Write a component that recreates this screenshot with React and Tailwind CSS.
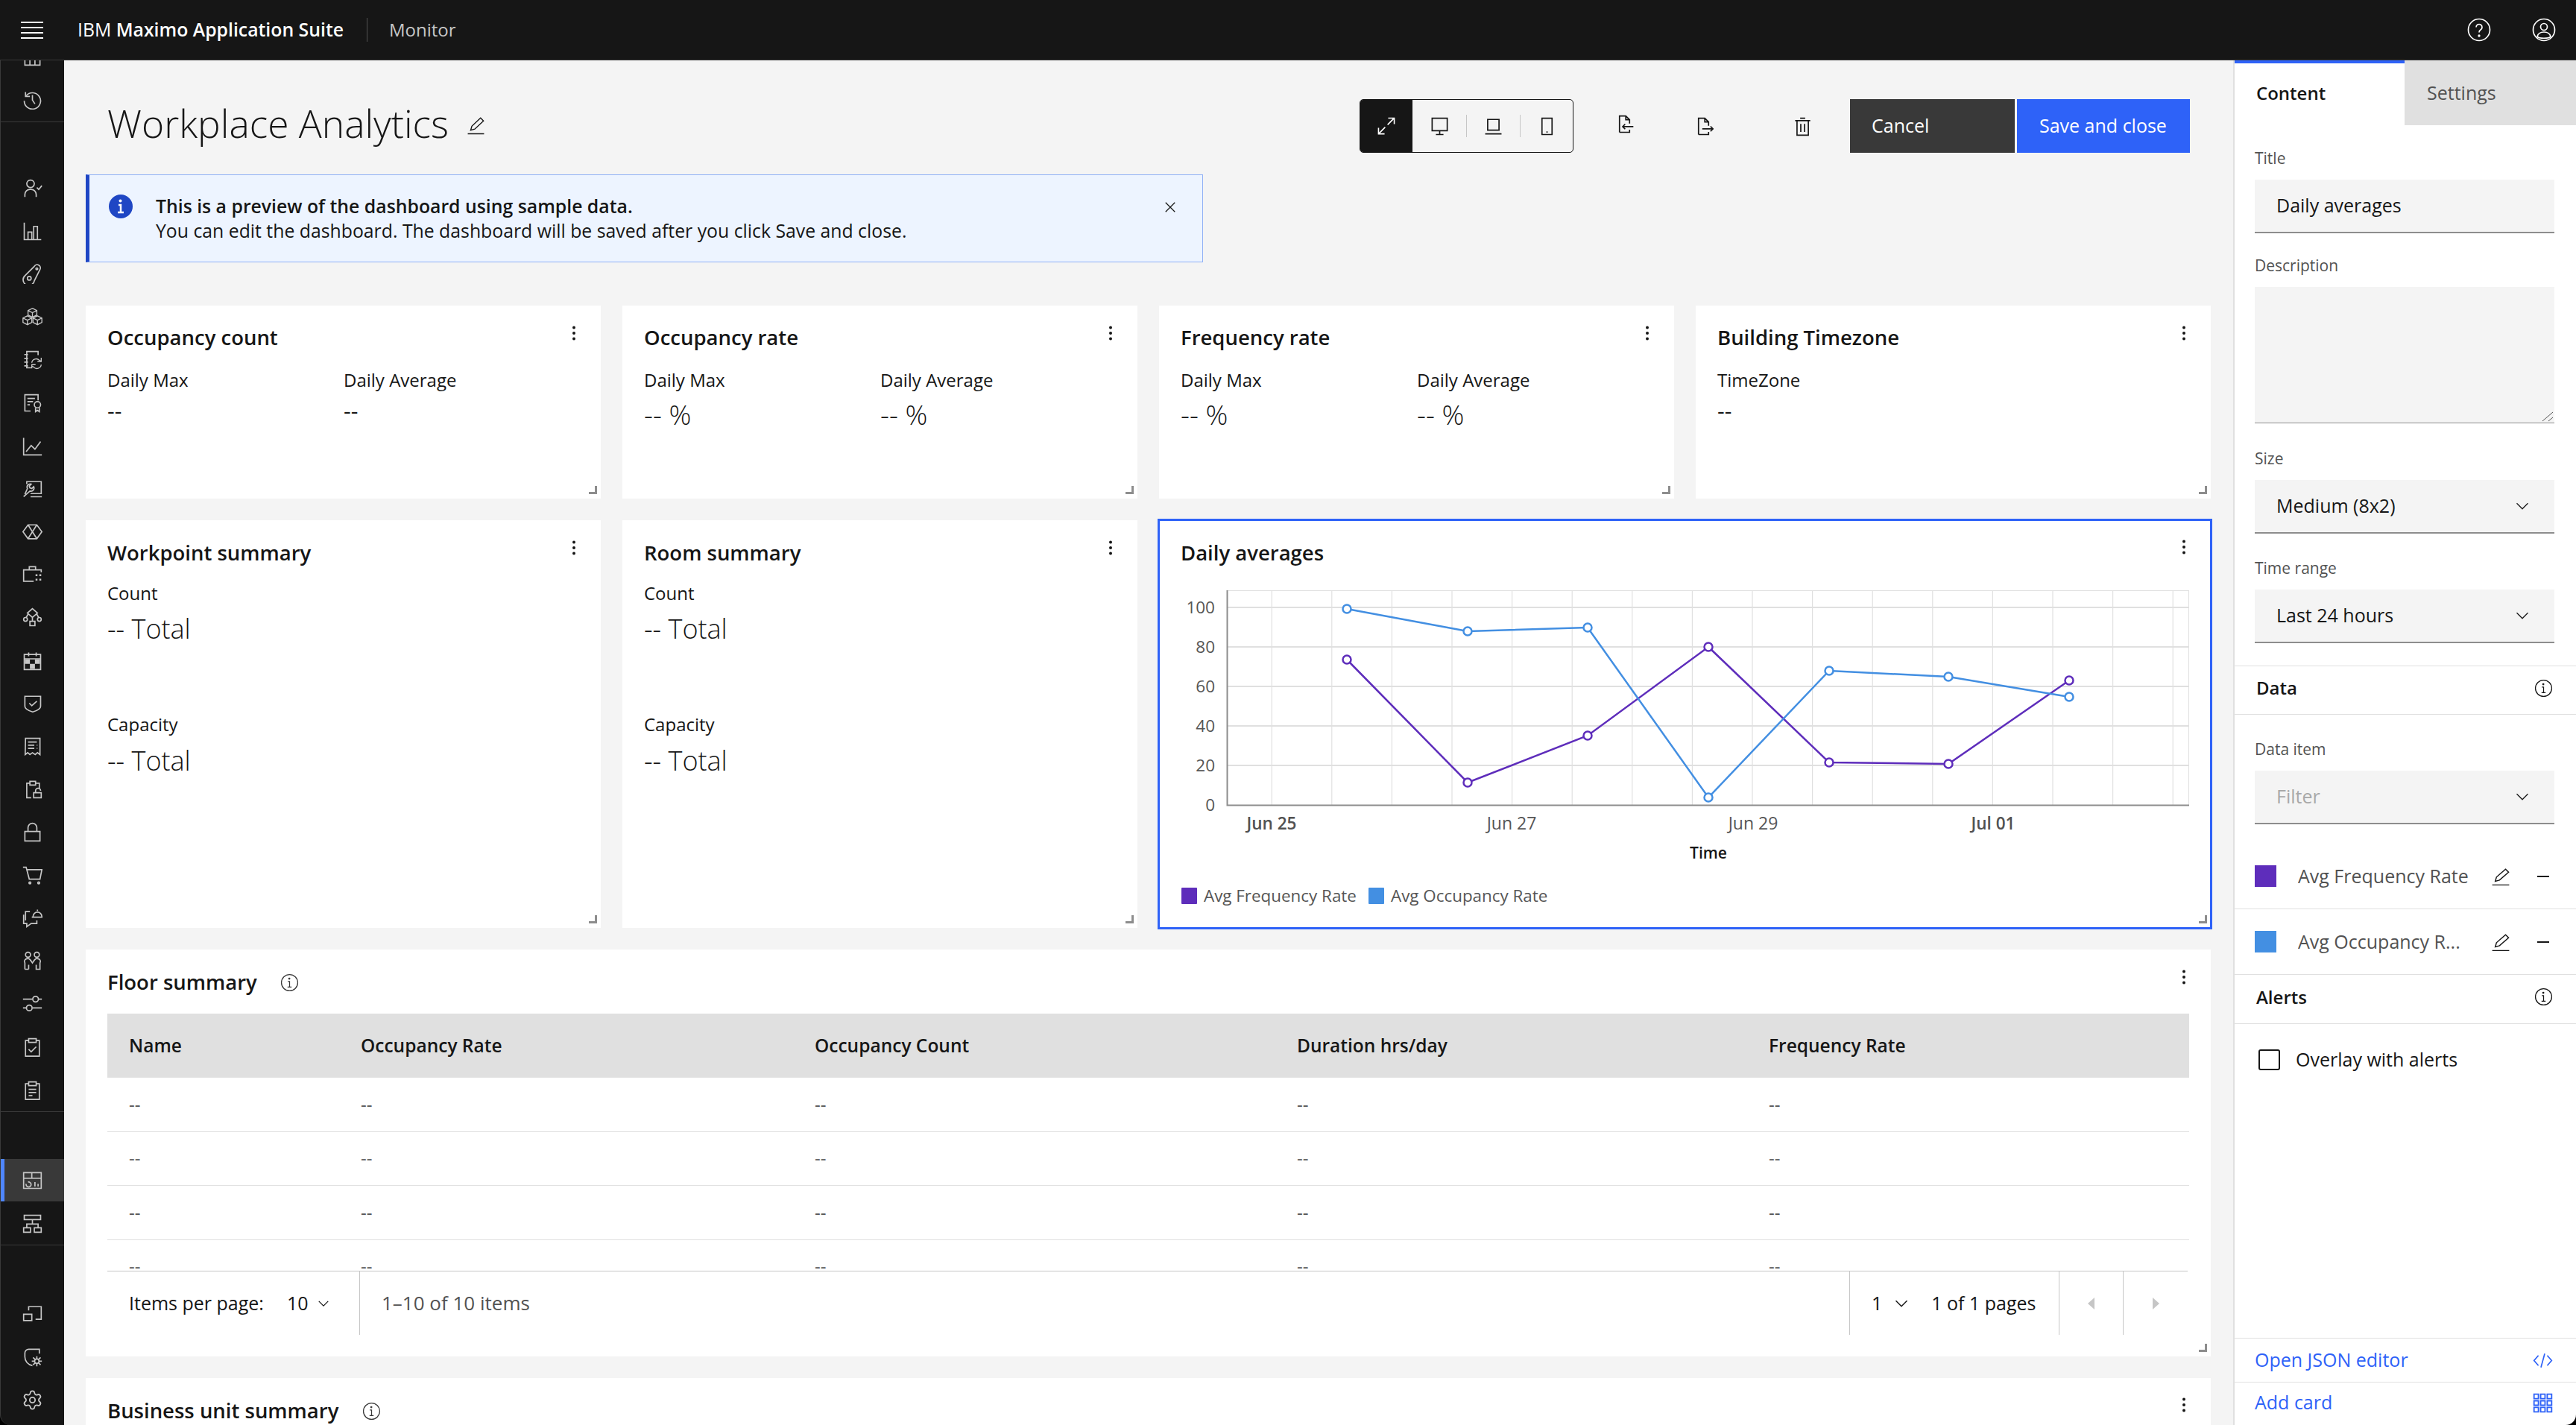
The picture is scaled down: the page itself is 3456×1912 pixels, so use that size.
import { Settings } from 'lucide-react';

const RAIL_TOP = [
  <path d="M4 20h24v10H4zM12 20v10M20 20v10" />,
  <>
    <path d="M5 4v7h7" />
    <path d="M6 10a13 13 0 1 1-3 8" />
    <path d="M16 9v8l4 6" />
  </>,
];

const cube = (cx, cy) =>
  `M${cx} ${cy - 7}l7 3.5v7l-7 3.5-7-3.5v-7zM${cx - 7} ${cy - 3.5}l7 3.5 7-3.5M${cx} ${cy}v7`;

const RAIL_MAIN = [
  <>
    <circle cx="13" cy="9" r="6" />
    <path d="M4 30v-4a8 8 0 0 1 8-8h2a8 8 0 0 1 8 8v4" />
    <path d="M23 15l3 3 5-6" />
  </>,
  <path d="M3 2v27h27M9 29V17h6v12M18 29V8h6v21" />,
  <>
    <path d="M5 18L19 4a5 5 0 0 1 9 5l-9 18a9 9 0 1 1-14-9z" />
    <circle cx="11" cy="23" r="3" />
    <circle cx="23" cy="8" r="1.5" />
  </>,
  <path d={cube(16, 9) + cube(8, 21) + cube(24, 21)} strokeWidth="1.6" />,
  <>
    <path d="M25 9V3H7v26h7M3 8h6M3 14h6M3 20h6M3 26h6" />
    <path d="M15 21a7 7 0 0 1 12-4l3 2M30 13v6h-6M30 24a7 7 0 0 1-12 4l-3-2M15 30v-6h6" strokeWidth="1.6" />
  </>,
  <>
    <path d="M13 29H4V3h21v9M8 9h12M8 14h9M8 19h4" />
    <circle cx="24" cy="19" r="5" />
    <path d="M21 24v6l3-2 3 2v-6" />
  </>,
  <path d="M2 3v27h29M6 25l8-10 6 6 9-12" />,
  <path d="M7 9V5h23v19H13M13 29h18M2 29l10-9a5 5 0 0 0 6-7l-3 3-3-1-1-3 3-3a5 5 0 0 0-6 7L4 25" />,
  <path d="M9 5h14l8 11-8 11H9L1 16zM9 5l14 22M23 5L9 27" />,
  <>
    <path d="M30 13V9H2v18h16M11 9V4h10v5" />
    <path d="M21 16h3v3h-3zM27 16h3v3h-3zM21 23h3v3h-3zM27 23h3v3h-3z" fill="currentColor" stroke="none" />
  </>,
  <>
    <path d="M16 2l8 7-8 7-8-7zM9 11l-3 5M23 11l3 5M16 16v6" />
    <circle cx="5" cy="19" r="3" />
    <circle cx="27" cy="19" r="3" />
    <path d="M12 22h8v7h-8z" />
  </>,
  <>
    <path d="M3 6h26v24H3zM3 13h26M10 3v6M22 3v6" />
    <path d="M4 14h8v7H4zM20 14h8v7h-8zM12 21h8v8h-8z" fill="currentColor" stroke="none" />
  </>,
  <path d="M4 5h25v16c0 4-6 7-12.500 9C10 28 4 25 4 21zM11 16l4 4 8-7" />,
  <path d="M5 3h23v26l-4-3-3.500 3-4.500-3-4 3-3.500-3-4 3zM9 9h14M9 14h10M9 19h10M23 14h1M23 19h1" />,
  <>
    <path d="M14 30H7V7h5M21 7h6v8M12 4h9v6h-9z" />
    <path d="M18 22h12v8H18zM21 22v-3a4 4 0 0 1 8 0" />
  </>,
  <path d="M4 15h24v15H4zM9 15V9a7 7 0 0 1 14 0v6" />,
  <>
    <path d="M1 3h5l5 19h17l3-15H8" />
    <circle cx="12" cy="28" r="1.500" />
    <circle cx="26" cy="28" r="1.500" />
  </>,
  <path d="M17 14a7 7 0 0 1 14 0M15 15h17M24 5V3M12 6H5v14M2 11v14h5v5l7-5h9v-5" />,
  <>
    <circle cx="9" cy="6" r="4" />
    <circle cx="23" cy="6" r="4" />
    <path d="M4 29V19c-2-3 0-7 5-7 3 0 5 4 7 7 2-3 4-7 7-7 5 0 7 4 5 7v10h-6v-7M10 29v-7M4 29h6" />
  </>,
  <>
    <path d="M1 9h15M26 9h5M1 23h5M16 23h15" />
    <circle cx="21" cy="9" r="4.500" />
    <circle cx="11" cy="23" r="4.500" />
  </>,
  <path d="M10 6H5v25h22V6h-5M10 3h12v6H10zM10 20l4 4 8-8" />,
  <path d="M10 6H5v25h22V6h-5M10 3h12v6H10zM10 15h12M10 20h12M10 25h6" />,
];

const IconDashboard = (
  <>
    <path d="M2 4h28v25H2zM2 13h28M15 4v9" />
    <path d="M6 22a4 4 0 1 0 3-3M20 26v-7M25 26v-4" />
  </>
);
const IconTree = <path d="M3 3h26v7H3zM2 23h11v7H2zM19 23h11v7H19zM16 10v7M7 23v-6h18v6" />;
const IconCorner = <path d="M10 11V5h20v20h-9M2 17h13v10H2z" />;
const IconAppGear = (
  <>
    <path d="M27 11V4H10a6 6 0 0 0-6 6v6a14 14 0 0 0 12 14" />
    <circle cx="23" cy="23" r="3.500" />
    <path d="M23 15v4M23 27v4M15 23h4M27 23h4M17 17l3 3M26 26l3 3M17 29l3-3M26 20l3-3" />
  </>
);

function Ic({ children, size = 27, stroke = 2, className = '' }) {
  return (
    <svg viewBox="0 0 32 32" width={size} height={size} fill="none" stroke="currentColor" strokeWidth={stroke} className={`shrink-0 ${className}`}>
      {children}
    </svg>
  );
}

function RailItem({ children, active }) {
  return (
    <div className={`flex h-[57.6px] shrink-0 items-center justify-center border-l-[5px] pr-[5px] ${active ? 'border-[#4f86ff] bg-[#393939]' : 'border-transparent'}`}>
      <Ic>{children}</Ic>
    </div>
  );
}

function Rail() {
  return (
    <aside className="flex w-[86px] shrink-0 flex-col overflow-hidden rounded-bl-[14px] border-l border-[#393939] bg-[#161616] text-[#c6c6c6]">
      <div className="-mt-[34.400px] shrink-0">
        {RAIL_TOP.map((icon, i) => (
          <RailItem key={i}>{icon}</RailItem>
        ))}
      </div>
      <div className="mt-[1px] shrink-0 border-t border-[#393939] pt-[60px]">
        {RAIL_MAIN.map((icon, i) => (
          <RailItem key={i}>{icon}</RailItem>
        ))}
      </div>
      <div className="shrink-0 border-t border-[#393939] pt-[63px]">
        <RailItem active>{IconDashboard}</RailItem>
        <RailItem>{IconTree}</RailItem>
      </div>
      <div className="shrink-0 border-t border-[#393939] pt-[63px]">
        <RailItem>{IconCorner}</RailItem>
        <RailItem>{IconAppGear}</RailItem>
        <div className="flex h-[57.6px] items-center justify-center px-[5px]">
          <Settings size={29} strokeWidth={1.500} />
        </div>
      </div>
    </aside>
  );
}

function Header() {
  return (
    <header className="flex h-[81px] shrink-0 items-center border-b border-[#393939] bg-[#161616] text-white">
      <div className="ml-[28px] flex w-[30px] flex-col gap-[5px]">
        <span className="h-[2px] bg-white" />
        <span className="h-[2px] bg-white" />
        <span className="h-[2px] bg-white" />
        <span className="h-[2px] bg-white" />
      </div>
      <div className="ml-[46px] w-[356px] text-[24.800px] whitespace-nowrap">
        IBM <span className="font-semibold">Maximo Application Suite</span>
      </div>
      <div className="ml-[32px] h-[32px] w-px bg-[#525252]" />
      <div className="ml-[29px] text-[24px] text-[#c6c6c6]">Monitor</div>
      <div className="ml-auto flex items-center gap-[55px] pr-[27px]">
        <Ic size={32} stroke={1.700}>
          <circle cx="16" cy="16" r="14.500" />
          <path d="M12 12.500a4 4 0 1 1 6 3.500c-1.500 1-2 2-2 3.500" />
          <circle cx="16" cy="24" r="0.800" fill="currentColor" />
        </Ic>
        <Ic size={32} stroke={1.700}>
          <circle cx="16" cy="16" r="14.500" />
          <circle cx="16" cy="12" r="4.500" />
          <path d="M7 25c1-4 4-6 9-6s8 2 9 6c-2 3-16 3-18 0z" />
        </Ic>
      </div>
    </header>
  );
}

function Dots({ className = '' }) {
  return (
    <svg width="6" height="20" viewBox="0 0 6 20" className={`absolute right-[33px] ${className}`} fill="#161616">
      <circle cx="3" cy="2.500" r="2" />
      <circle cx="3" cy="10" r="2" />
      <circle cx="3" cy="17.500" r="2" />
    </svg>
  );
}

function Handle() {
  return <span className="absolute right-[5px] bottom-[6px] h-[11px] w-[11px] border-r-[3px] border-b-[3px] border-[#8d8d8d]" />;
}

function InfoIcon({ size = 25 }) {
  return (
    <Ic size={size} stroke={1.600}>
      <circle cx="16" cy="16" r="14" />
      <path d="M12.500 23.500h7M16 23.500V14h-3" />
      <circle cx="15.500" cy="9" r="1" fill="currentColor" />
    </Ic>
  );
}

function CardTitle({ children }) {
  return <h3 className="h-[32px] text-[27.500px] leading-[32px] font-semibold text-[#161616]">{children}</h3>;
}

function KpiCard({ title, cols, big }) {
  return (
    <section className="relative bg-white pt-[27px] pr-[30px] pl-[29px]">
      <CardTitle>{title}</CardTitle>
      <Dots className="top-[27px]" />
      <div className="mt-[29px] grid grid-cols-[317px_1fr]">
        {cols.map((label) => (
          <div key={label}>
            <div className="h-[24px] text-[24px] leading-[24px] text-[#161616]">{label}</div>
            <div className={big ? 'mt-[14px] h-[40px] text-[37px] leading-[40px] font-light text-[#161616]' : 'mt-[11px] h-[36px] text-[30px] leading-[36px] text-[#161616]'}>
              {big ? '-- %' : '--'}
            </div>
          </div>
        ))}
      </div>
      <Handle />
    </section>
  );
}

function TotalCard({ title }) {
  return (
    <section className="relative bg-white pt-[28px] pr-[30px] pl-[29px]">
      <CardTitle>{title}</CardTitle>
      <Dots className="top-[27px]" />
      <div className="mt-[26px] h-[24px] text-[24px] leading-[24px] text-[#161616]">Count</div>
      <div className="mt-[16px] h-[40px] text-[36px] leading-[40px] font-light text-[#161616]">-- Total</div>
      <div className="mt-[96px] h-[24px] text-[24px] leading-[24px] text-[#161616]">Capacity</div>
      <div className="mt-[17px] h-[40px] text-[36px] leading-[40px] font-light text-[#161616]">-- Total</div>
      <Handle />
    </section>
  );
}

const GRID_X = Array.from({ length: 16 }, (_, i) => 1706.2 + 80.6 * i);
const GRID_Y = [815, 868, 921, 974, 1027];
const DATA_X = [1807, 1969, 2130, 2292, 2454, 2614, 2776];
const OCC_Y = [817, 847, 842, 1070, 900, 908, 935];
const FREQ_Y = [885, 1050, 987, 868, 1023, 1025, 913];

function Series({ ys, color }) {
  const pts = DATA_X.map((x, i) => `${x},${ys[i]}`).join(' ');
  return (
    <g>
      <polyline points={pts} fill="none" stroke={color} strokeWidth="2.500" />
      {DATA_X.map((x, i) => (
        <circle key={x} cx={x} cy={ys[i]} r="5.500" fill="white" stroke={color} strokeWidth="2.500" />
      ))}
    </g>
  );
}

function ChartCard() {
  return (
    <section className="relative col-span-2 bg-white pt-[28px] outline-3 -outline-offset-1 outline-[#2e62f8]">
      <div className="px-[29px]">
        <CardTitle>Daily averages</CardTitle>
      </div>
      <Dots className="top-[26px]" />
      <svg viewBox="1555 780 1411 390" width="1411" height="390" className="mt-[22px] block font-['Open_Sans',sans-serif]">
        <path d="M1646 792.500H2937" stroke="#e0e0e0" />
        {GRID_X.map((x) => (
          <line key={x} x1={x} x2={x} y1="792" y2="1080" stroke="#e0e0e0" strokeWidth="1.200" />
        ))}
        <line x1="2936.500" x2="2936.500" y1="792" y2="1080" stroke="#e0e0e0" />
        {GRID_Y.map((y) => (
          <line key={y} x1="1646" x2="2937" y1={y} y2={y} stroke="#e0e0e0" strokeWidth="2" />
        ))}
        <path d="M1646.500 792V1080.500H2937" fill="none" stroke="#8d8d8d" strokeWidth="2" />
        {[100, 80, 60, 40, 20, 0].map((v, i) => (
          <text key={v} x="1630" y={815 + i * 53 + 8} textAnchor="end" fontSize="22.500" fill="#565656">
            {v}
          </text>
        ))}
        <text x="1706" y="1113" textAnchor="middle" fontSize="22.500" fontWeight="600" fill="#525252">Jun 25</text>
        <text x="2028" y="1113" textAnchor="middle" fontSize="23" fill="#565656">Jun 27</text>
        <text x="2352" y="1113" textAnchor="middle" fontSize="23" fill="#565656">Jun 29</text>
        <text x="2674" y="1113" textAnchor="middle" fontSize="22.500" fontWeight="600" fill="#525252">Jul 01</text>
        <text x="2292" y="1152" textAnchor="middle" fontSize="21" fontWeight="600" fill="#161616">Time</text>
        <Series ys={FREQ_Y} color="#5e2dbb" />
        <Series ys={OCC_Y} color="#438fe2" />
      </svg>
      <div className="mt-[21px] flex items-center pl-[30px] text-[22.400px] leading-[22px] text-[#565656]">
        <span className="mr-[9px] h-[22px] w-[21px] rounded-[1px] bg-[#5e2dbb]" />
        <span className="w-[221px] whitespace-nowrap">Avg Frequency Rate</span>
        <span className="mr-[9px] h-[22px] w-[21px] rounded-[1px] bg-[#438fe2]" />
        <span>Avg Occupancy Rate</span>
      </div>
      <Handle />
    </section>
  );
}

const TABLE_COLS = 'grid grid-cols-[311px_609px_647px_633px_594px]';

function FloorCard() {
  const headers = ['Name', 'Occupancy Rate', 'Occupancy Count', 'Duration hrs/day', 'Frequency Rate'];
  return (
    <section className="relative col-span-4 h-[546px] bg-white px-[29px] pt-[28px]">
      <div className="flex h-[32px] items-center gap-[31px] text-[#393939]">
        <CardTitle>Floor summary</CardTitle>
        <InfoIcon />
      </div>
      <Dots className="top-[27px]" />
      <div className={`${TABLE_COLS} mt-[26px] h-[86px] items-center bg-[#e0e0e0] text-[24.500px] font-semibold text-[#161616]`}>
        {headers.map((h) => (
          <div key={h} className="pl-[29px]">{h}</div>
        ))}
      </div>
      <div className="h-[259px] overflow-hidden">
        {[0, 1, 2, 3].map((r) => (
          <div key={r} className={`${TABLE_COLS} h-[72.500px] shrink-0 items-center border-b border-[#e0e0e0] text-[24px] text-[#525252]`}>
            {headers.map((h) => (
              <div key={h} className="pl-[29px]">--</div>
            ))}
          </div>
        ))}
      </div>
      <div className="mr-[2px] flex h-[86px] items-stretch border-t border-[#c6c6c6] text-[25px] text-[#161616]">
        <div className="flex w-[339px] items-center border-r border-[#c6c6c6] pl-[29px]">
          <span>Items per page:</span>
          <span className="ml-[31px]">10</span>
          <Ic size={20} className="ml-[10px]"><path d="M6 11l10 10 10-10" /></Ic>
        </div>
        <div className="flex items-center pl-[29px] text-[26px] text-[#525252]">1–10 of 10 items</div>
        <div className="ml-auto flex w-[282px] items-center border-x border-[#c6c6c6] pl-[29px]">
          <span>1</span>
          <Ic size={24} className="ml-[14px]"><path d="M6 11l10 10 10-10" /></Ic>
          <span className="ml-[28px]">1 of 1 pages</span>
        </div>
        <div className="flex w-[86px] items-center justify-center border-r border-[#c6c6c6]">
          <span className="h-0 w-0 border-y-[8px] border-r-[9px] border-y-transparent border-r-[#c6c6c6]" />
        </div>
        <div className="flex w-[86px] items-center justify-center">
          <span className="h-0 w-0 border-y-[8px] border-l-[9px] border-y-transparent border-l-[#c6c6c6]" />
        </div>
      </div>
      <Handle />
    </section>
  );
}

function BusinessCard() {
  return (
    <section className="relative col-span-4 h-[200px] bg-white px-[29px] pt-[28px]">
      <div className="flex h-[32px] items-center gap-[32px] text-[#393939]">
        <CardTitle>Business unit summary</CardTitle>
        <InfoIcon />
      </div>
      <Dots className="top-[26px]" />
    </section>
  );
}

function Toolbar() {
  return (
    <div className="flex items-center text-[#161616]">
      <div className="flex h-[72px] w-[287px] overflow-hidden rounded-[5px] border border-[#161616] bg-[#f4f4f4]">
        <div className="flex w-[70px] items-center justify-center bg-[#161616] text-white">
          <Ic size={26}><path d="M19 3h10v10M29 3L18 14M13 29H3V19M3 29l11-11" /></Ic>
        </div>
        <div className="flex w-[72px] items-center justify-center">
          <Ic><path d="M4 3h24v20H4zM16 23v6M10 29h12" /></Ic>
        </div>
        <div className="my-[20px] w-px bg-[#c6c6c6]" />
        <div className="flex w-[71px] items-center justify-center">
          <Ic><path d="M7 5h18v17H7zM3 28h26" /></Ic>
        </div>
        <div className="my-[20px] w-px bg-[#c6c6c6]" />
        <div className="flex flex-1 items-center justify-center">
          <Ic><path d="M8 3h16v26H8zM15 25h2" /></Ic>
        </div>
      </div>
      <div className="ml-[54px] flex w-[29px] -translate-y-[3px] justify-center">
        <Ic><path d="M8 29V3h10l6 6v6M18 3v6h6M8 29h16v-4M30 20H13M17 16l-4 4 4 4" /></Ic>
      </div>
      <div className="ml-[77px] flex w-[29px] justify-center">
        <Ic><path d="M8 29V3h10l6 6v6M18 3v6h6M8 29h16v-4M14 20h17M27 16l4 4-4 4" /></Ic>
      </div>
      <div className="ml-[104px] flex w-[29px] justify-center">
        <Ic><path d="M4 7h24M12 3h8M7 7v23h18V7M13 12v13M19 12v13" /></Ic>
      </div>
      <button className="ml-[49px] flex h-[72px] w-[221px] items-center bg-[#393939] pl-[29px] text-[25px] text-white">Cancel</button>
      <button className="ml-[3px] flex h-[72px] w-[232px] items-center bg-[#2e62f8] pl-[30px] text-[25px] text-white">Save and close</button>
    </div>
  );
}

function Notice() {
  return (
    <div className="relative mt-[29px] ml-[29px] flex h-[118px] w-[1499px] border-y border-r border-l-[5px] border-y-[#8fb0f5] border-r-[#8fb0f5] border-l-[#1f46c4] bg-[#edf4ff] pt-[25px] text-[24.800px] leading-[33px] text-[#161616]">
      <svg viewBox="0 0 32 32" width="32" height="32" className="mt-[1px] ml-[26px] shrink-0">
        <circle cx="16" cy="16" r="16" fill="#1f46c4" />
        <path d="M12 24h8M16 24V14h-3" stroke="white" strokeWidth="2.500" fill="none" />
        <circle cx="15.500" cy="8.500" r="2" fill="white" />
      </svg>
      <div className="ml-[31px]">
        <div className="font-semibold">This is a preview of the dashboard using sample data.</div>
        <div>You can edit the dashboard. The dashboard will be saved after you click Save and close.</div>
      </div>
      <Ic size={20} className="absolute top-[33px] right-[33px]"><path d="M6 6l20 20M26 6L6 26" /></Ic>
    </div>
  );
}

function Label({ children, className = '' }) {
  return <div className={`h-[24px] text-[21px] leading-[24px] text-[#525252] ${className}`}>{children}</div>;
}

function Select({ value, placeholder }) {
  return (
    <div className={`mt-[17px] flex h-[72px] items-center justify-between border-b-2 border-[#8d8d8d] bg-[#f4f4f4] pr-[33px] pl-[29px] text-[25px] ${placeholder ? 'text-[#a8a8a8]' : 'text-[#161616]'}`}>
      {value}
      <Ic size={20} className="text-[#161616]"><path d="M4 10l12 12 12-12" /></Ic>
    </div>
  );
}

function DataRow({ color, label }) {
  return (
    <div className="flex h-[88px] items-center border-b border-[#e0e0e0] pl-[27px]">
      <span className={`h-[29px] w-[29px] shrink-0 ${color}`} />
      <span className="ml-[29px] w-[259px] truncate text-[25px] text-[#525252]">{label}</span>
      <span className="text-[#161616]">
        <Ic size={26} stroke={1.800}><path d="M2 30h28M24 4l5 5-15 13-7 2 2-7z" /></Ic>
      </span>
      <span className="ml-[36px] h-[2px] w-[16px] bg-[#161616]" />
    </div>
  );
}

function SectionHead({ children, className = '' }) {
  return (
    <div className={`flex h-[66px] items-center justify-between border-b border-[#e0e0e0] pr-[31px] pb-[6px] pl-[29px] text-[24px] font-semibold text-[#161616] ${className}`}>
      {children}
      <InfoIcon />
    </div>
  );
}

function Panel() {
  return (
    <aside className="flex w-[460px] shrink-0 flex-col overflow-hidden rounded-br-[14px] border-l-2 border-[#e0e0e0] bg-white">
      <div className="flex h-[87px] shrink-0 text-[24px]">
        <div className="flex w-[228px] items-center border-t-4 border-[#2e62f8] pb-[4px] pl-[29px] font-semibold text-[#161616]">Content</div>
        <div className="flex w-[230px] items-center bg-[#e0e0e0] pl-[30px] text-[25px] text-[#525252]">Settings</div>
      </div>
      <div className="pr-[29px] pl-[27px]">
        <Label className="mt-[32px]">Title</Label>
        <div className="mt-[17px] flex h-[72px] items-center border-b-2 border-[#8d8d8d] bg-[#f4f4f4] pl-[29px] text-[25px] text-[#161616]">Daily averages</div>
        <Label className="mt-[31px]">Description</Label>
        <div className="relative mt-[17px] h-[183px] border-b border-[#8d8d8d] bg-[#f4f4f4]">
          <svg width="16" height="14" viewBox="0 0 16 14" className="absolute right-[1px] bottom-[1px]" stroke="#525252" strokeWidth="1">
            <path d="M1 13L15 1M9 13l6-5" />
          </svg>
        </div>
        <Label className="mt-[35px]">Size</Label>
        <Select value="Medium (8x2)" />
        <Label className="mt-[34px]">Time range</Label>
        <Select value="Last 24 hours" />
      </div>
      <SectionHead className="mt-[30px] border-t">Data</SectionHead>
      <div className="pr-[29px] pl-[27px]">
        <Label className="mt-[34px]">Data item</Label>
        <Select value="Filter" placeholder />
      </div>
      <div className="mt-[26px]">
        <DataRow color="bg-[#5e2dbb]" label="Avg Frequency Rate" />
        <DataRow color="bg-[#438fe2]" label="Avg Occupancy R..." />
      </div>
      <SectionHead>Alerts</SectionHead>
      <div className="mt-[29px] flex items-center pl-[32px] text-[25px] text-[#161616]">
        <span className="h-[28px] w-[29px] rounded-[3px] border-2 border-[#161616]" />
        <span className="ml-[21px]">Overlay with alerts</span>
      </div>
      <div className="mt-auto text-[25px] text-[#2e62f8]">
        <div className="flex h-[59px] items-center justify-between border-t border-[#e0e0e0] pr-[31px] pl-[27px]">
          Open JSON editor
          <Ic size={27}><path d="M9 8l-7 8 7 8M23 8l7 8-7 8M19 5l-6 22" /></Ic>
        </div>
        <div className="flex h-[58px] items-center justify-between border-t border-[#e0e0e0] pr-[31px] pb-[3px] pl-[27px]">
          Add card
          <Ic size={27} stroke={2.200}>
            <path d="M2 2h7v7H2zM12.500 2h7v7h-7zM23 2h7v7h-7zM2 12.500h7v7H2zM12.500 12.500h7v7h-7zM23 12.500h7v7h-7zM2 23h7v7H2zM12.500 23h7v7h-7zM23 23h7v7h-7z" />
          </Ic>
        </div>
      </div>
    </aside>
  );
}

export default function App() {
  return (
    <div className="flex h-[1912px] w-[3456px] flex-col overflow-hidden bg-black font-['Open_Sans',sans-serif]">
      <Header />
      <div className="flex min-h-0 flex-1">
        <Rail />
        <main className="min-w-0 flex-1 overflow-hidden bg-[#f4f4f4]">
          <div className="mt-[52px] mr-[58px] ml-[58px] flex h-[72px] items-center justify-between">
            <div className="flex items-center gap-[24px] text-[#161616]">
              <h1 className="pb-[9px] text-[51.500px] leading-[60px] font-light">Workplace Analytics</h1>
              <Ic size={25} className="-mt-[2px]" stroke={1.800}><path d="M2 30h28M24 3l5 5-15 14-7 2 2-7z" /></Ic>
            </div>
            <Toolbar />
          </div>
          <Notice />
          <div className="mt-[58px] ml-[29px] grid w-[2851px] grid-cols-[691px_691px_691px_691px] grid-rows-[259px_547px_546px_200px] gap-[29px]">
            <KpiCard title="Occupancy count" cols={['Daily Max', 'Daily Average']} />
            <KpiCard title="Occupancy rate" cols={['Daily Max', 'Daily Average']} big />
            <KpiCard title="Frequency rate" cols={['Daily Max', 'Daily Average']} big />
            <KpiCard title="Building Timezone" cols={['TimeZone']} />
            <TotalCard title="Workpoint summary" />
            <TotalCard title="Room summary" />
            <ChartCard />
            <FloorCard />
            <BusinessCard />
          </div>
        </main>
        <Panel />
      </div>
    </div>
  );
}
